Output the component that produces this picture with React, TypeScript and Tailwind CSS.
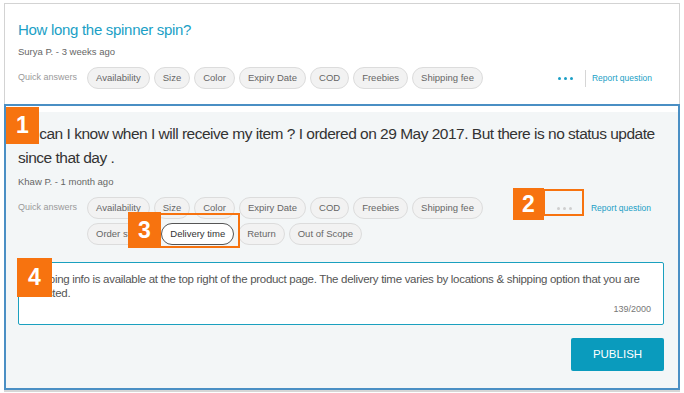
import React from "react";

const firstRow = ["Availability", "Size", "Color", "Expiry Date", "COD", "Freebies", "Shipping fee"];

function Chip({ label, active }: { label: string; active?: boolean }) {
  return (
    <span
      className={
        "flex h-[22px] items-center rounded-full border px-[8px] text-[9.5px] " +
        (active
          ? "border-[#555] bg-white text-[#333]"
          : "border-[#dcdcdc] bg-[#f2f2f2] text-[#666]")
      }
    >
      {label}
    </span>
  );
}

function Badge({ n, className }: { n: number; className: string }) {
  return (
    <div
      className={
        "absolute flex items-center justify-center bg-[#f7730f] text-[23px] font-bold text-white " +
        className
      }
    >
      {n}
    </div>
  );
}

function Dots({ color }: { color: string }) {
  return (
    <div className="flex w-[15px] items-center justify-between">
      <span className={"h-[3px] w-[3px] rounded-full " + color} />
      <span className={"h-[3px] w-[3px] rounded-full " + color} />
      <span className={"h-[3px] w-[3px] rounded-full " + color} />
    </div>
  );
}

export default function App() {
  return (
    <div
      className="relative h-[393px] w-[684px] overflow-hidden bg-white px-[4px] pt-[3px]"
      style={{ fontFamily: '"Liberation Sans", Arial, sans-serif' }}
    >
      {/* question 1 */}
      <div className="h-[101px] border border-b-0 border-[#d3d3d3] pl-[13px] pt-[16px]">
        <h2 className="text-[15px] leading-[20px] tracking-[-0.3px] text-[#1b9fc6]">How long the spinner spin?</h2>
        <p className="mt-[5px] text-[9.5px] leading-[14px] text-[#666]">Surya P. - 3 weeks ago</p>
        <div className="mt-[8px] flex items-center">
          <span className="w-[69px] text-[9px] text-[#9a9a9a]">Quick answers</span>
          <div className="flex gap-[4px]">
            {firstRow.map((c) => (
              <Chip key={c} label={c} />
            ))}
          </div>
          <div className="ml-auto mr-[27px] flex items-center">
            <Dots color="bg-[#1b9fc6]" />
            <span className="ml-[12px] h-[17px] w-px bg-[#d6d6d6]" />
            <span className="ml-[6px] text-[8.5px] text-[#1b9fc6]">Report question</span>
          </div>
        </div>
      </div>

      {/* question 2, being answered */}
      <div className="relative h-[286px] border-2 border-[#4a8fc4] bg-[#f3f6f7]">
        <div className="h-[6px] bg-white" />
        <div className="pl-[12px] pr-[14px] pt-[10px]">
          <p className="text-[15.5px] leading-[24px] tracking-[-0.5px] text-[#333]">
            Hi, can I know when I will receive my item ? I ordered on 29 May 2017. But there is no status update since that day .
          </p>
          <p className="mt-[5px] text-[9.5px] leading-[14px] text-[#666]">Khaw P. - 1 month ago</p>
          <div className="mt-[8px] flex items-start">
            <span className="flex h-[22px] w-[69px] items-center text-[9px] text-[#9a9a9a]">Quick answers</span>
            <div className="flex flex-col gap-[4px]">
              <div className="flex gap-[4px]">
                {firstRow.map((c) => (
                  <Chip key={c} label={c} />
                ))}
              </div>
              <div className="flex gap-[4px]">
                <Chip label="Order status" />
                <Chip label="Delivery time" active />
                <Chip label="Return" />
                <Chip label="Out of Scope" />
              </div>
            </div>
            <div className="ml-auto mr-[13px] flex h-[22px] items-center">
              <Dots color="bg-[#cfcfcf]" />
              <span className="ml-[12px] h-[17px] w-px bg-transparent" />
              <span className="ml-[6px] text-[8.5px] text-[#1b9fc6]">Report question</span>
            </div>
          </div>

          <div className="mt-[17px] h-[63px] rounded-[2px] border border-[#1aa0bf] bg-white pl-[8px] pr-[12px] pt-[9px]">
            <p className="text-[11.5px] leading-[14px] tracking-[-0.3px] text-[#555]">
              Shipping info is available at the top right of the product page. The delivery time varies by locations &amp; shipping option that you are selected.
            </p>
            <p className="mt-[3px] text-right text-[9px] text-[#777]">139/2000</p>
          </div>

          <div className="mt-[13px] flex justify-end">
            <button className="h-[33px] w-[93px] rounded-[2px] bg-[#0a9bbd] text-[11.5px] text-white">PUBLISH</button>
          </div>
        </div>

        {/* annotation overlays */}
        <Badge n={1} className="left-[0px] top-[1px] h-[37px] w-[33px]" />
        <Badge n={2} className="left-[507px] top-[82px] h-[32px] w-[31px]" />
        <div className="absolute left-[537px] top-[83px] h-[27px] w-[41px] border-2 border-[#f7730f]" />
        <Badge n={3} className="left-[122px] top-[106px] h-[36px] w-[33px]" />
        <div className="absolute left-[122px] top-[107px] h-[35px] w-[112px] border-2 border-[#f7730f]" />
        <Badge n={4} className="left-[11px] top-[152px] h-[39px] w-[35px]" />
      </div>
      <div className="h-[2px] bg-[#d6d6d6]" />
    </div>
  );
}
